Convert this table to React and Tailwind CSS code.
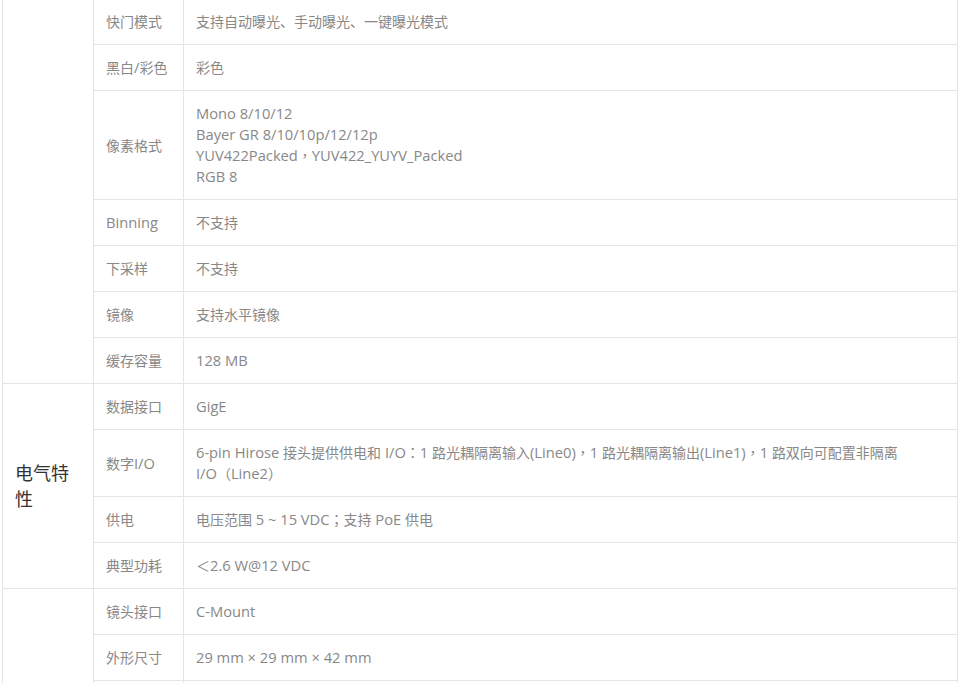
import React from "react";

const font = { fontFamily: '"Open Sans", "Noto Sans CJK SC", sans-serif' };
const tc = { fontFamily: '"Noto Sans CJK TC", sans-serif' };

function T({ s }) {
  const parts = s.split(/([，：（）；＜]|[A-Za-z0-9\-\/_.@~×() ]+)/).filter((p) => p);
  return (
    <>
      {parts.map((p, i) =>
        /^[，：（）；＜]$/.test(p) ? (
          <span key={i} style={tc}>
            {p}
          </span>
        ) : /^[A-Za-z0-9\-\/_.@~×() ]+$/.test(p) ? (
          <span key={i} className="text-[14.7px]">
            {p}
          </span>
        ) : (
          <React.Fragment key={i}>{p}</React.Fragment>
        )
      )}
    </>
  );
}

const sections = [
  {
    label: "",
    rows: [
      ["快门模式", ["支持自动曝光、手动曝光、一键曝光模式"]],
      ["黑白/彩色", ["彩色"]],
      ["像素格式", ["Mono 8/10/12", "Bayer GR 8/10/10p/12/12p", "YUV422Packed，YUV422_YUYV_Packed", "RGB 8"]],
      ["Binning", ["不支持"]],
      ["下采样", ["不支持"]],
      ["镜像", ["支持水平镜像"]],
      ["缓存容量", ["128 MB"]],
    ],
  },
  {
    label: "电气特性",
    rows: [
      ["数据接口", ["GigE"]],
      ["数字I/O", ["6-pin Hirose 接头提供供电和 I/O：1 路光耦隔离输入(Line0)，1 路光耦隔离输出(Line1)，1 路双向可配置非隔离", "I/O（Line2）"]],
      ["供电", ["电压范围 5 ~ 15 VDC；支持 PoE 供电"]],
      ["典型功耗", ["＜2.6 W@12 VDC"]],
    ],
  },
  {
    label: "",
    rows: [
      ["镜头接口", ["C-Mount"]],
      ["外形尺寸", ["29 mm × 29 mm × 42 mm"]],
      ["重量", ["约 68 g"]],
    ],
  },
];

export default function App() {
  return (
    <div className="h-[683px] w-[961px] overflow-hidden bg-white" style={font}>
      <table className="ml-[2px] mt-[-2px] w-[956px] table-fixed border-collapse text-[14px] leading-[21px] text-[#888]">
        <colgroup>
          <col className="w-[91px]" />
          <col className="w-[90px]" />
          <col />
        </colgroup>
        <tbody>
          {sections.map((s, si) =>
            s.rows.map((r, ri) => (
              <tr key={si + "-" + ri}>
                {ri === 0 && (
                  <td
                    rowSpan={s.rows.length}
                    className="border border-[#e5e5e5] px-3 py-3 align-middle text-[18px] leading-[26px] text-[#333]"
                  >
                    {s.label}
                  </td>
                )}
                <td className="border border-[#e5e5e5] px-3 py-3 align-middle">
                  <T s={r[0]} />
                </td>
                <td className="border border-[#e5e5e5] px-3 py-3 align-middle">
                  {r[1].map((l, li) => (
                    <div key={li}>
                      <T s={l} />
                    </div>
                  ))}
                </td>
              </tr>
            ))
          )}
        </tbody>
      </table>
    </div>
  );
}
